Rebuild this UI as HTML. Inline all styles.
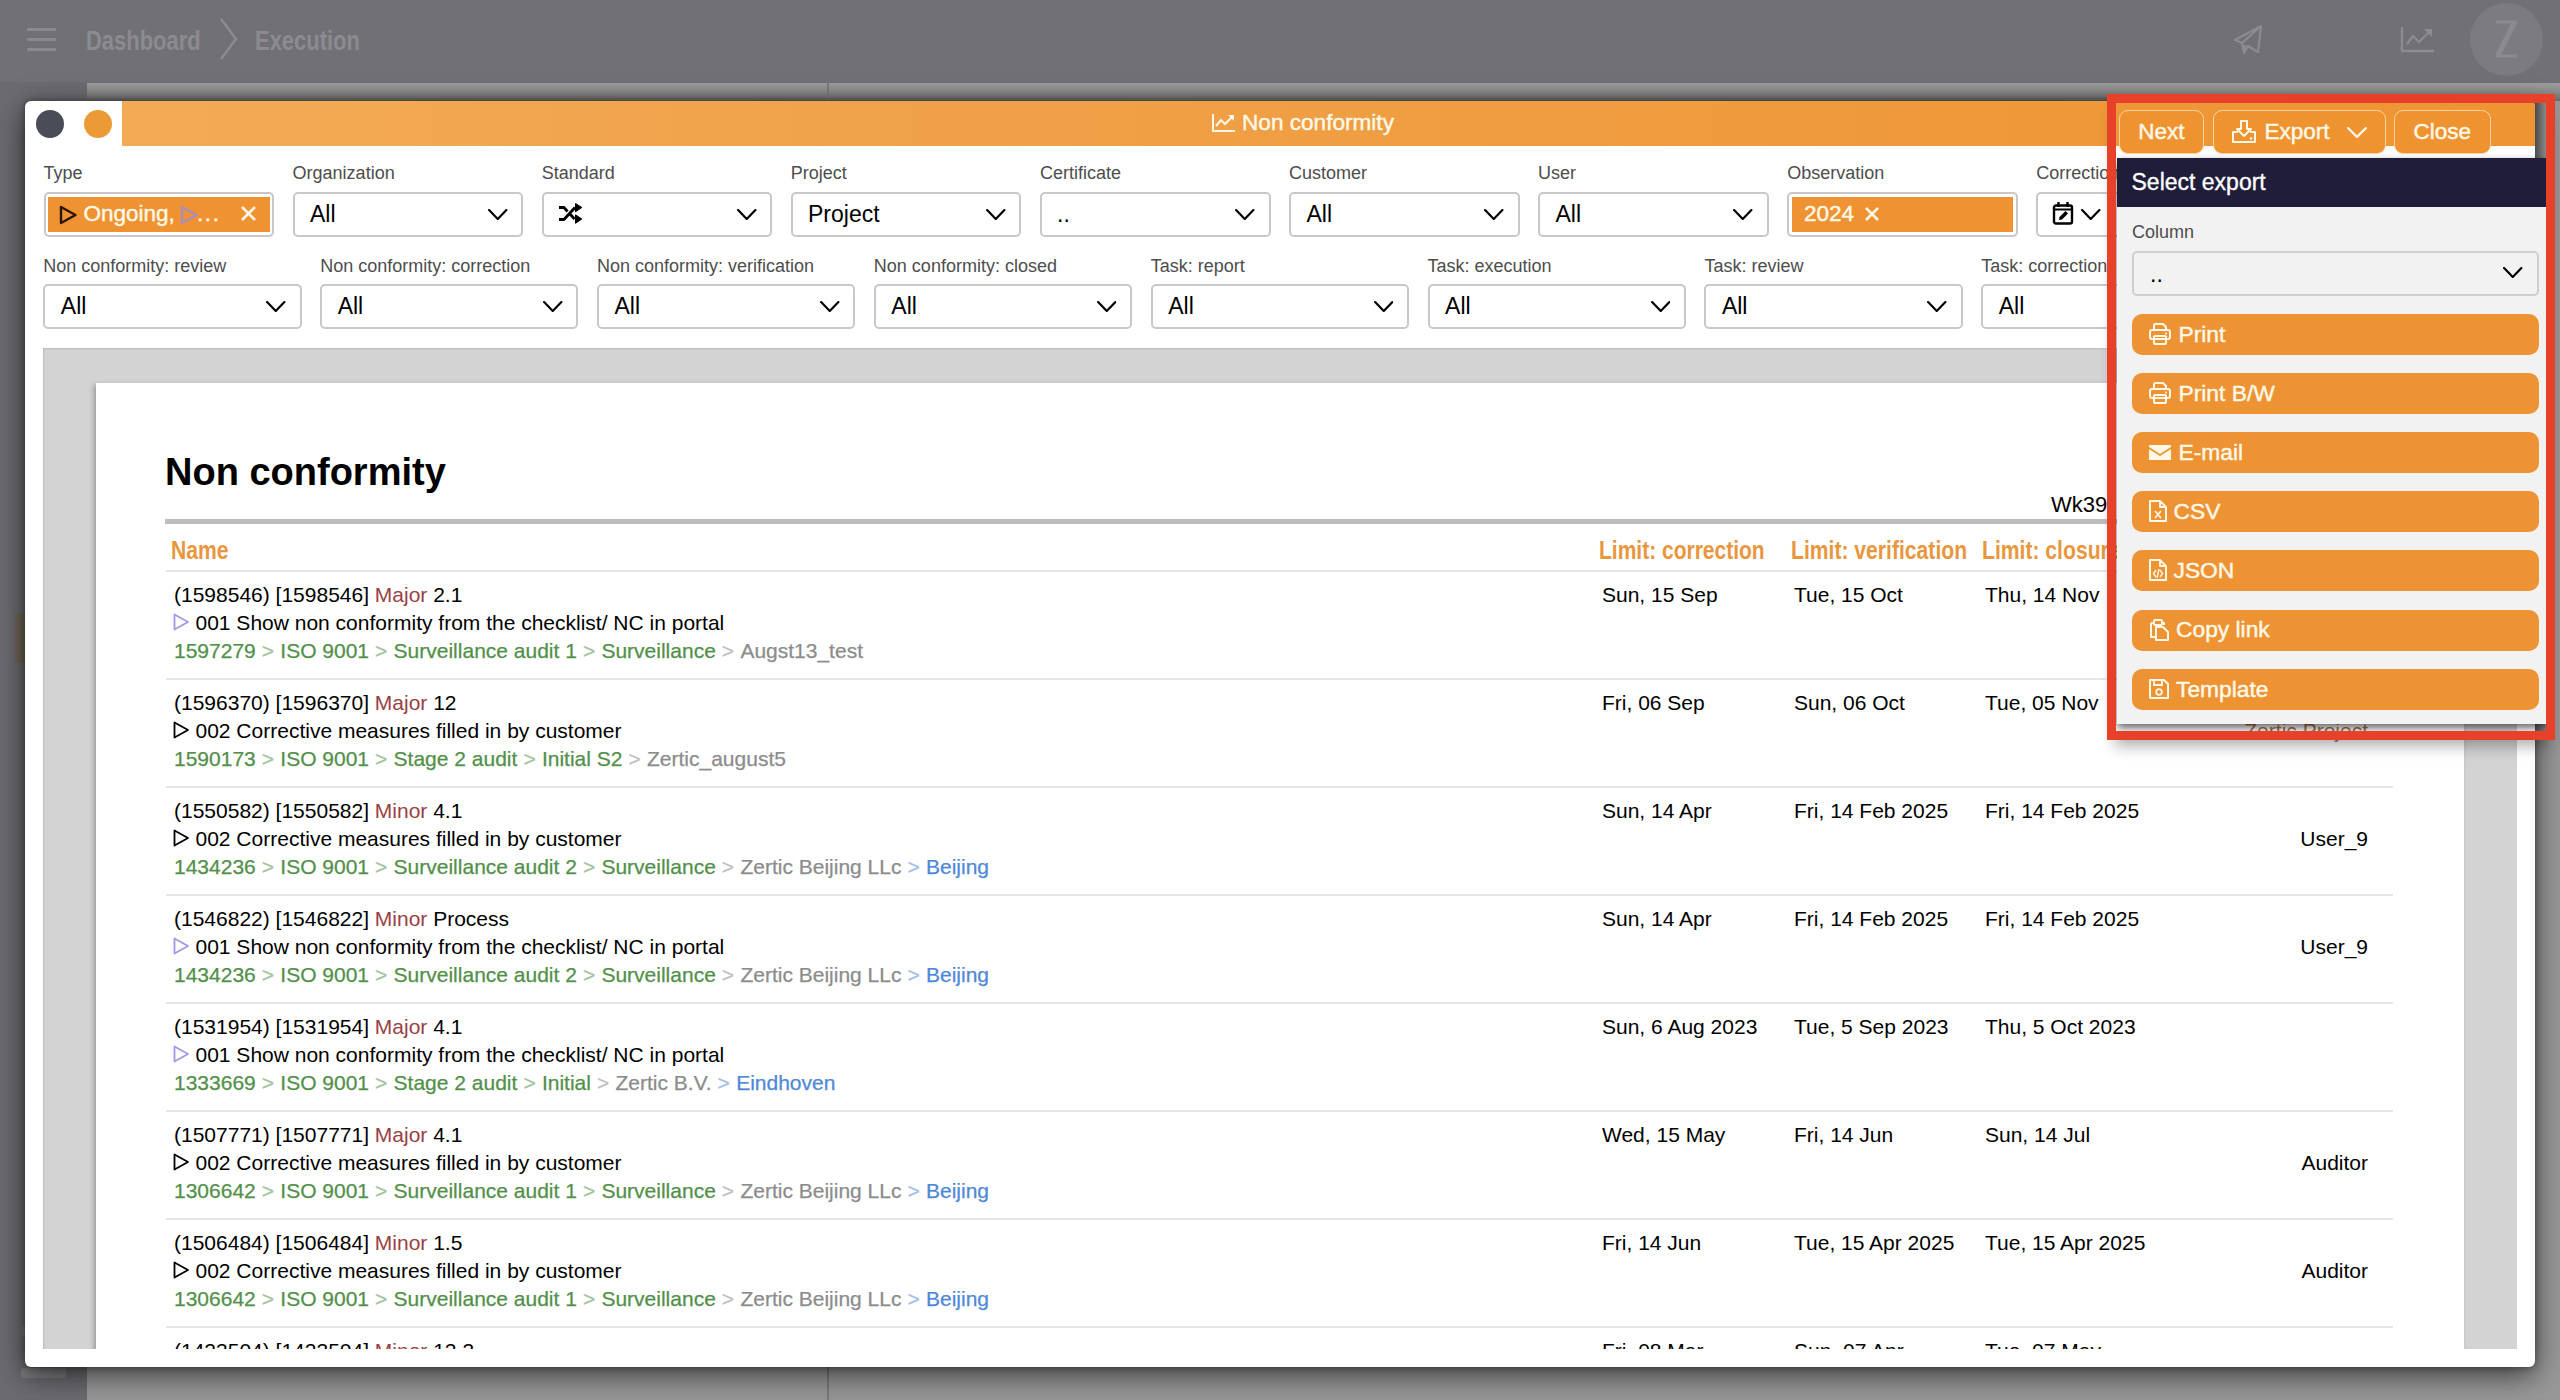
<!DOCTYPE html>
<html><head><meta charset="utf-8">
<style>
html,body{margin:0;padding:0;}
body{width:2560px;height:1400px;overflow:hidden;position:relative;background:#989898;font-family:"Liberation Sans", sans-serif;}
.a{position:absolute;}
.t{position:absolute;line-height:1;white-space:nowrap;}
</style></head><body>
<div class="a" style="left:0px;top:0px;width:2560px;height:82.7px;background:#717075;"></div>
<div class="a" style="left:0px;top:82px;width:87px;height:1318px;background:#6c6b70;"></div>
<div class="a" style="left:87px;top:82.7px;width:2473px;height:18px;background:linear-gradient(#9d9d9f,#8a8a8a 50%,#6a6a6a);"></div>
<div class="a" style="left:827px;top:82px;width:2px;height:18px;background:#7a7a7a;"></div>
<div class="a" style="left:827px;top:1367px;width:2px;height:33px;background:#7a7a7a;"></div>
<div class="a" style="left:15px;top:613px;width:14px;height:50px;background:#6f6756;border-radius:3px;"></div>
<div class="a" style="left:21px;top:1368px;width:45px;height:10px;background:#7d7c80;border-radius:3px;"></div>
<div class="a" style="left:22px;top:1326px;width:4px;height:10px;background:#79787c;"></div>
<div class="a" style="left:27px;top:28px;width:29px;height:3.2px;background:#8a898e;border-radius:1px;"></div>
<div class="a" style="left:27px;top:38px;width:29px;height:3.2px;background:#8a898e;border-radius:1px;"></div>
<div class="a" style="left:27px;top:48px;width:29px;height:3.2px;background:#8a898e;border-radius:1px;"></div>
<div class="t" style="left:86px;top:26.17px;font-size:28.5px;color:#8c8b90;font-weight:700;transform:scaleX(0.77);transform-origin:0 0;">Dashboard</div>
<svg class="a" style="left:219px;top:17px" width="20" height="44" viewBox="0 0 20 44"><polyline points="2,2 17,22 2,42" fill="none" stroke="#8c8b90" stroke-width="2.4"/></svg>
<div class="t" style="left:255px;top:26.17px;font-size:28.5px;color:#8c8b90;font-weight:700;transform:scaleX(0.77);transform-origin:0 0;">Execution</div>
<svg class="a" style="left:2232px;top:24px" width="32" height="32" viewBox="0 0 32 32"><path d="M29 2 L3 16 L10 19 L12 29 L16 22 L26 28 Z M10 19 L29 2 M12 29 L13 21" fill="none" stroke="#8c8b90" stroke-width="2.2" stroke-linejoin="round"/></svg>
<svg class="a" style="left:2400px;top:26px" width="36" height="28" viewBox="0 0 36 28"><path d="M2 1 V25 H34" fill="none" stroke="#8c8b90" stroke-width="2.4"/><path d="M7 18 L13 10 L19 16 L30 5" fill="none" stroke="#8c8b90" stroke-width="2.4"/><path d="M24 3 L32 3 L32 11 Z" fill="#8c8b90"/></svg>
<div class="a" style="left:2469.5px;top:3px;width:73px;height:73px;background:#7c7b80;border-radius:50%;"></div>
<svg class="a" style="left:2494px;top:19px" width="26" height="40" viewBox="0 0 26 40"><path d="M2 1.5 H23 V4.5 L7.5 35.5 H23 V38.5 H1.5 V35.5 L17 4.5 H2 Z" fill="#8b8a8e"/></svg>
<div class="a" style="left:25px;top:101px;width:2510px;height:1266px;background:#fff;border-radius:6px;box-shadow:0 0 6px rgba(0,0,0,0.4),0 8px 30px rgba(0,0,0,0.62);"></div>
<div class="a" style="left:122px;top:101px;width:2413px;height:45px;background:linear-gradient(90deg,#f3aa55 0%,#f0a046 40%,#ee9433 100%);border-top-right-radius:6px;"></div>
<div class="a" style="left:35.5px;top:109.5px;width:28px;height:28px;background:#4a4c58;border-radius:50%;"></div>
<div class="a" style="left:84px;top:109.5px;width:28px;height:28px;background:#ec9a35;border-radius:50%;"></div>
<svg class="a" style="left:1211px;top:113px" width="26" height="20" viewBox="0 0 26 20"><path d="M2 1 V18 H24" fill="none" stroke="#fff8e6" stroke-width="2"/><path d="M5 13 L10 7 L14 11 L21 4" fill="none" stroke="#fff8e6" stroke-width="2"/><path d="M17 2 L23 2 L23 8 Z" fill="#fff8e6"/></svg>
<div class="t" style="left:1242px;top:112.06px;font-size:22.6px;color:#fff8e6;font-weight:400;-webkit-text-stroke:0.45px #fff8e6;">Non conformity</div>
<div class="t" style="left:43.5px;top:164.06px;font-size:18px;color:#4d4d4d;font-weight:400;">Type</div>
<div class="a" style="left:43.5px;top:191.5px;width:230.7px;height:45.5px;border:2px solid #c8c8c8;border-radius:5px;box-sizing:border-box;background:#fff;"></div>
<div class="t" style="left:292.6px;top:164.06px;font-size:18px;color:#4d4d4d;font-weight:400;">Organization</div>
<div class="a" style="left:292.6px;top:191.5px;width:230.7px;height:45.5px;border:2px solid #c8c8c8;border-radius:5px;box-sizing:border-box;background:#fff;"></div>
<div class="t" style="left:541.7px;top:164.06px;font-size:18px;color:#4d4d4d;font-weight:400;">Standard</div>
<div class="a" style="left:541.7px;top:191.5px;width:230.7px;height:45.5px;border:2px solid #c8c8c8;border-radius:5px;box-sizing:border-box;background:#fff;"></div>
<div class="t" style="left:790.8px;top:164.06px;font-size:18px;color:#4d4d4d;font-weight:400;">Project</div>
<div class="a" style="left:790.8px;top:191.5px;width:230.7px;height:45.5px;border:2px solid #c8c8c8;border-radius:5px;box-sizing:border-box;background:#fff;"></div>
<div class="t" style="left:1039.9px;top:164.06px;font-size:18px;color:#4d4d4d;font-weight:400;">Certificate</div>
<div class="a" style="left:1039.9px;top:191.5px;width:230.7px;height:45.5px;border:2px solid #c8c8c8;border-radius:5px;box-sizing:border-box;background:#fff;"></div>
<div class="t" style="left:1289.0px;top:164.06px;font-size:18px;color:#4d4d4d;font-weight:400;">Customer</div>
<div class="a" style="left:1289.0px;top:191.5px;width:230.7px;height:45.5px;border:2px solid #c8c8c8;border-radius:5px;box-sizing:border-box;background:#fff;"></div>
<div class="t" style="left:1538.1px;top:164.06px;font-size:18px;color:#4d4d4d;font-weight:400;">User</div>
<div class="a" style="left:1538.1px;top:191.5px;width:230.7px;height:45.5px;border:2px solid #c8c8c8;border-radius:5px;box-sizing:border-box;background:#fff;"></div>
<div class="t" style="left:1787.2px;top:164.06px;font-size:18px;color:#4d4d4d;font-weight:400;">Observation</div>
<div class="a" style="left:1787.2px;top:191.5px;width:230.7px;height:45.5px;border:2px solid #c8c8c8;border-radius:5px;box-sizing:border-box;background:#fff;"></div>
<div class="t" style="left:2036.3px;top:164.06px;font-size:18px;color:#4d4d4d;font-weight:400;">Correction</div>
<div class="a" style="left:2036.3px;top:191.5px;width:230.7px;height:45.5px;border:2px solid #c8c8c8;border-radius:5px;box-sizing:border-box;background:#fff;"></div>
<div class="a" style="left:48px;top:197px;width:222px;height:35px;background:#ee9232;"></div>
<svg class="a" style="left:59px;top:205px" width="19" height="20" viewBox="0 0 19 20"><path d="M2 2 L16.5 10 L2 18 Z" fill="none" stroke="#2a1608" stroke-width="2.4" stroke-linejoin="round"/></svg>
<div class="t" style="left:83.5px;top:202.95px;font-size:22.5px;color:#fff8e6;font-weight:400;-webkit-text-stroke:0.45px #fff8e6;">Ongoing,</div>
<svg class="a" style="left:180px;top:205px" width="19" height="20" viewBox="0 0 19 20"><path d="M2 2 L16.5 10 L2 18 Z" fill="none" stroke="#a98cc0" stroke-width="2.4" stroke-linejoin="round"/></svg>
<div class="t" style="left:197px;top:202.95px;font-size:22.5px;color:#fff8e6;font-weight:400;letter-spacing:1.6px;-webkit-text-stroke:0.45px #fff8e6;">...</div>
<svg class="a" style="left:240px;top:205px" width="17" height="17" viewBox="0 0 17 17"><path d="M2 2 L15 15 M15 2 L2 15" stroke="#fff8e6" stroke-width="2.6"/></svg>
<div class="t" style="left:310px;top:202.53px;font-size:23px;color:#000;font-weight:400;">All</div>
<svg class="a" style="left:488px;top:208.5px" width="19.5" height="11" viewBox="0 0 19.5 11"><polyline points="1.1,1.1 9.75,9.9 18.4,1.1" fill="none" stroke="#000" stroke-width="2.2" stroke-linecap="round" stroke-linejoin="round"/></svg>
<svg class="a" style="left:557px;top:203px" width="26" height="23" viewBox="0 0 26 23"><path d="M2 4.5 H7 L10.5 8.5 M2 16.5 H7 L18 4.5 M13.5 11.5 L17.5 16" fill="none" stroke="#000" stroke-width="2.8" stroke-linejoin="round"/><path d="M18.5 0.5 L24.8 4.5 L18.5 8.8 Z M18.5 11.8 L24.8 16 L18.5 20.3 Z" fill="#000" stroke="#000" stroke-width="1" stroke-linejoin="round"/></svg>
<svg class="a" style="left:737px;top:208.5px" width="19.5" height="11" viewBox="0 0 19.5 11"><polyline points="1.1,1.1 9.75,9.9 18.4,1.1" fill="none" stroke="#000" stroke-width="2.2" stroke-linecap="round" stroke-linejoin="round"/></svg>
<div class="t" style="left:808px;top:202.53px;font-size:23px;color:#000;font-weight:400;">Project</div>
<svg class="a" style="left:986px;top:208.5px" width="19.5" height="11" viewBox="0 0 19.5 11"><polyline points="1.1,1.1 9.75,9.9 18.4,1.1" fill="none" stroke="#000" stroke-width="2.2" stroke-linecap="round" stroke-linejoin="round"/></svg>
<div class="t" style="left:1057px;top:202.53px;font-size:23px;color:#000;font-weight:400;">..</div>
<svg class="a" style="left:1235px;top:208.5px" width="19.5" height="11" viewBox="0 0 19.5 11"><polyline points="1.1,1.1 9.75,9.9 18.4,1.1" fill="none" stroke="#000" stroke-width="2.2" stroke-linecap="round" stroke-linejoin="round"/></svg>
<div class="t" style="left:1306.5px;top:202.53px;font-size:23px;color:#000;font-weight:400;">All</div>
<svg class="a" style="left:1484px;top:208.5px" width="19.5" height="11" viewBox="0 0 19.5 11"><polyline points="1.1,1.1 9.75,9.9 18.4,1.1" fill="none" stroke="#000" stroke-width="2.2" stroke-linecap="round" stroke-linejoin="round"/></svg>
<div class="t" style="left:1555.5px;top:202.53px;font-size:23px;color:#000;font-weight:400;">All</div>
<svg class="a" style="left:1733px;top:208.5px" width="19.5" height="11" viewBox="0 0 19.5 11"><polyline points="1.1,1.1 9.75,9.9 18.4,1.1" fill="none" stroke="#000" stroke-width="2.2" stroke-linecap="round" stroke-linejoin="round"/></svg>
<div class="a" style="left:1792px;top:197px;width:221px;height:35px;background:#ee9232;"></div>
<div class="t" style="left:1804px;top:202.95px;font-size:22.5px;color:#fff8e6;font-weight:400;-webkit-text-stroke:0.45px #fff8e6;">2024</div>
<svg class="a" style="left:1864px;top:206px" width="16" height="16" viewBox="0 0 16 16"><path d="M2 2 L14 14 M14 2 L2 14" stroke="#fff8e6" stroke-width="2.6"/></svg>
<svg class="a" style="left:2052px;top:201px" width="22" height="24" viewBox="0 0 22 24"><rect x="2" y="4.5" width="18" height="18" rx="2" fill="none" stroke="#000" stroke-width="2.4"/><path d="M6.5 1 V6 M15.5 1 V6" stroke="#000" stroke-width="2.4"/><path d="M2 8.5 H20" stroke="#000" stroke-width="2"/><path d="M7 19 L7.5 16 L13.5 10 L16 12.5 L10 18.5 Z" fill="#000"/></svg>
<svg class="a" style="left:2081px;top:208.5px" width="19.5" height="11" viewBox="0 0 19.5 11"><polyline points="1.1,1.1 9.75,9.9 18.4,1.1" fill="none" stroke="#000" stroke-width="2.2" stroke-linecap="round" stroke-linejoin="round"/></svg>
<div class="t" style="left:43.3px;top:256.76px;font-size:18px;color:#4d4d4d;font-weight:400;">Non conformity: review</div>
<div class="a" style="left:43.3px;top:283.6px;width:258.3px;height:45.2px;border:2px solid #c8c8c8;border-radius:5px;box-sizing:border-box;background:#fff;"></div>
<div class="t" style="left:60.8px;top:294.53px;font-size:23px;color:#000;font-weight:400;">All</div>
<svg class="a" style="left:266.3px;top:301px" width="19.5" height="11" viewBox="0 0 19.5 11"><polyline points="1.1,1.1 9.75,9.9 18.4,1.1" fill="none" stroke="#000" stroke-width="2.2" stroke-linecap="round" stroke-linejoin="round"/></svg>
<div class="t" style="left:320.15px;top:256.76px;font-size:18px;color:#4d4d4d;font-weight:400;">Non conformity: correction</div>
<div class="a" style="left:320.15px;top:283.6px;width:258.3px;height:45.2px;border:2px solid #c8c8c8;border-radius:5px;box-sizing:border-box;background:#fff;"></div>
<div class="t" style="left:337.65px;top:294.53px;font-size:23px;color:#000;font-weight:400;">All</div>
<svg class="a" style="left:543.15px;top:301px" width="19.5" height="11" viewBox="0 0 19.5 11"><polyline points="1.1,1.1 9.75,9.9 18.4,1.1" fill="none" stroke="#000" stroke-width="2.2" stroke-linecap="round" stroke-linejoin="round"/></svg>
<div class="t" style="left:597.0px;top:256.76px;font-size:18px;color:#4d4d4d;font-weight:400;">Non conformity: verification</div>
<div class="a" style="left:597.0px;top:283.6px;width:258.3px;height:45.2px;border:2px solid #c8c8c8;border-radius:5px;box-sizing:border-box;background:#fff;"></div>
<div class="t" style="left:614.5px;top:294.53px;font-size:23px;color:#000;font-weight:400;">All</div>
<svg class="a" style="left:820.0px;top:301px" width="19.5" height="11" viewBox="0 0 19.5 11"><polyline points="1.1,1.1 9.75,9.9 18.4,1.1" fill="none" stroke="#000" stroke-width="2.2" stroke-linecap="round" stroke-linejoin="round"/></svg>
<div class="t" style="left:873.85px;top:256.76px;font-size:18px;color:#4d4d4d;font-weight:400;">Non conformity: closed</div>
<div class="a" style="left:873.85px;top:283.6px;width:258.3px;height:45.2px;border:2px solid #c8c8c8;border-radius:5px;box-sizing:border-box;background:#fff;"></div>
<div class="t" style="left:891.35px;top:294.53px;font-size:23px;color:#000;font-weight:400;">All</div>
<svg class="a" style="left:1096.85px;top:301px" width="19.5" height="11" viewBox="0 0 19.5 11"><polyline points="1.1,1.1 9.75,9.9 18.4,1.1" fill="none" stroke="#000" stroke-width="2.2" stroke-linecap="round" stroke-linejoin="round"/></svg>
<div class="t" style="left:1150.7px;top:256.76px;font-size:18px;color:#4d4d4d;font-weight:400;">Task: report</div>
<div class="a" style="left:1150.7px;top:283.6px;width:258.3px;height:45.2px;border:2px solid #c8c8c8;border-radius:5px;box-sizing:border-box;background:#fff;"></div>
<div class="t" style="left:1168.2px;top:294.53px;font-size:23px;color:#000;font-weight:400;">All</div>
<svg class="a" style="left:1373.7px;top:301px" width="19.5" height="11" viewBox="0 0 19.5 11"><polyline points="1.1,1.1 9.75,9.9 18.4,1.1" fill="none" stroke="#000" stroke-width="2.2" stroke-linecap="round" stroke-linejoin="round"/></svg>
<div class="t" style="left:1427.55px;top:256.76px;font-size:18px;color:#4d4d4d;font-weight:400;">Task: execution</div>
<div class="a" style="left:1427.55px;top:283.6px;width:258.3px;height:45.2px;border:2px solid #c8c8c8;border-radius:5px;box-sizing:border-box;background:#fff;"></div>
<div class="t" style="left:1445.05px;top:294.53px;font-size:23px;color:#000;font-weight:400;">All</div>
<svg class="a" style="left:1650.55px;top:301px" width="19.5" height="11" viewBox="0 0 19.5 11"><polyline points="1.1,1.1 9.75,9.9 18.4,1.1" fill="none" stroke="#000" stroke-width="2.2" stroke-linecap="round" stroke-linejoin="round"/></svg>
<div class="t" style="left:1704.4px;top:256.76px;font-size:18px;color:#4d4d4d;font-weight:400;">Task: review</div>
<div class="a" style="left:1704.4px;top:283.6px;width:258.3px;height:45.2px;border:2px solid #c8c8c8;border-radius:5px;box-sizing:border-box;background:#fff;"></div>
<div class="t" style="left:1721.9px;top:294.53px;font-size:23px;color:#000;font-weight:400;">All</div>
<svg class="a" style="left:1927.4px;top:301px" width="19.5" height="11" viewBox="0 0 19.5 11"><polyline points="1.1,1.1 9.75,9.9 18.4,1.1" fill="none" stroke="#000" stroke-width="2.2" stroke-linecap="round" stroke-linejoin="round"/></svg>
<div class="t" style="left:1981.25px;top:256.76px;font-size:18px;color:#4d4d4d;font-weight:400;">Task: correction</div>
<div class="a" style="left:1981.25px;top:283.6px;width:258.3px;height:45.2px;border:2px solid #c8c8c8;border-radius:5px;box-sizing:border-box;background:#fff;"></div>
<div class="t" style="left:1998.75px;top:294.53px;font-size:23px;color:#000;font-weight:400;">All</div>
<svg class="a" style="left:2204.25px;top:301px" width="19.5" height="11" viewBox="0 0 19.5 11"><polyline points="1.1,1.1 9.75,9.9 18.4,1.1" fill="none" stroke="#000" stroke-width="2.2" stroke-linecap="round" stroke-linejoin="round"/></svg>
<div class="a" style="left:43px;top:348px;width:2474px;height:1001px;background:#d3d3d3;overflow:hidden;box-shadow:inset 1px 1px 2px rgba(0,0,0,0.12);">
<div class="a" style="left:53px;top:35px;width:2368px;height:1200px;background:#fff;box-shadow:-2px 2px 5px rgba(0,0,0,0.28);"></div>
<div class="t" style="left:122px;top:105.13px;font-size:38px;color:#000;font-weight:700;">Non conformity</div>
<div class="t" style="left:2008px;top:145.67px;font-size:22px;color:#000;font-weight:400;">Wk39</div>
<div class="a" style="left:122px;top:171px;width:2228px;height:5px;background:#bdbdbd;"></div>
<div class="t" style="left:128px;top:189.83px;font-size:25px;color:#e8973f;font-weight:700;transform:scaleX(0.845);transform-origin:0 0;">Name</div>
<div class="t" style="left:1556px;top:189.83px;font-size:25px;color:#e8973f;font-weight:700;transform:scaleX(0.84);transform-origin:0 0;">Limit: correction</div>
<div class="t" style="left:1747.5px;top:189.83px;font-size:25px;color:#e8973f;font-weight:700;transform:scaleX(0.845);transform-origin:0 0;">Limit: verification</div>
<div class="t" style="left:1939px;top:189.83px;font-size:25px;color:#e8973f;font-weight:700;transform:scaleX(0.845);transform-origin:0 0;">Limit: closure</div>
<div class="t" style="left:2207px;top:189.83px;font-size:25px;color:#e8973f;font-weight:700;transform:scaleX(0.845);transform-origin:0 0;">User</div>
<div class="a" style="left:123px;top:222px;width:2227px;height:2px;background:#e6e6e6;"></div>
<div class="t" style="left:131px;top:236.22px;font-size:21px;color:#000;font-weight:400;">(1598546) [1598546] <span style="color:#9a4043">Major</span> 2.1</div>
<svg class="a" style="left:130px;top:265.29999999999995px" width="17" height="18" viewBox="0 0 17 18"><path d="M1.5 1.5 L15 9 L1.5 16.5 Z" fill="none" stroke="#9c9ce6" stroke-width="1.8" stroke-linejoin="round"/></svg>
<div class="t" style="left:152.5px;top:264.22px;font-size:21px;color:#000;font-weight:400;">001 Show non conformity from the checklist/ NC in portal</div>
<div class="t" style="left:131px;top:291.72px;font-size:21px;color:#000;font-weight:400;-webkit-text-stroke:0.25px currentColor;"><span style="color:#52904a">1597279</span><span style="color:#52904a;opacity:0.55;letter-spacing:0.2px"> &gt; </span><span style="color:#52904a">ISO 9001</span><span style="color:#52904a;opacity:0.55;letter-spacing:0.2px"> &gt; </span><span style="color:#52904a">Surveillance audit 1</span><span style="color:#52904a;opacity:0.55;letter-spacing:0.2px"> &gt; </span><span style="color:#52904a">Surveillance</span><span style="color:#8c8c8c;opacity:0.55;letter-spacing:0.2px"> &gt; </span><span style="color:#8c8c8c">Augst13_test</span></div>
<div class="t" style="left:1559px;top:236.22px;font-size:21px;color:#000;font-weight:400;">Sun, 15 Sep</div>
<div class="t" style="left:1751px;top:236.22px;font-size:21px;color:#000;font-weight:400;">Tue, 15 Oct</div>
<div class="t" style="left:1942px;top:236.22px;font-size:21px;color:#000;font-weight:400;">Thu, 14 Nov</div>
<div class="a" style="left:123px;top:330px;width:2227px;height:2px;background:#e6e6e6;"></div>
<div class="t" style="left:131px;top:344.22px;font-size:21px;color:#000;font-weight:400;">(1596370) [1596370] <span style="color:#9a4043">Major</span> 12</div>
<svg class="a" style="left:130px;top:373.29999999999995px" width="17" height="18" viewBox="0 0 17 18"><path d="M1.5 1.5 L15 9 L1.5 16.5 Z" fill="none" stroke="#000" stroke-width="1.8" stroke-linejoin="round"/></svg>
<div class="t" style="left:152.5px;top:372.22px;font-size:21px;color:#000;font-weight:400;">002 Corrective measures filled in by customer</div>
<div class="t" style="left:131px;top:399.72px;font-size:21px;color:#000;font-weight:400;-webkit-text-stroke:0.25px currentColor;"><span style="color:#52904a">1590173</span><span style="color:#52904a;opacity:0.55;letter-spacing:0.2px"> &gt; </span><span style="color:#52904a">ISO 9001</span><span style="color:#52904a;opacity:0.55;letter-spacing:0.2px"> &gt; </span><span style="color:#52904a">Stage 2 audit</span><span style="color:#52904a;opacity:0.55;letter-spacing:0.2px"> &gt; </span><span style="color:#52904a">Initial S2</span><span style="color:#8c8c8c;opacity:0.55;letter-spacing:0.2px"> &gt; </span><span style="color:#8c8c8c">Zertic_august5</span></div>
<div class="t" style="left:1559px;top:344.22px;font-size:21px;color:#000;font-weight:400;">Fri, 06 Sep</div>
<div class="t" style="left:1751px;top:344.22px;font-size:21px;color:#000;font-weight:400;">Sun, 06 Oct</div>
<div class="t" style="left:1942px;top:344.22px;font-size:21px;color:#000;font-weight:400;">Tue, 05 Nov</div>
<div class="t" style="right:149px;top:372.22px;font-size:21px;color:#a87550">Zertic Project</div>
<div class="a" style="left:123px;top:438px;width:2227px;height:2px;background:#e6e6e6;"></div>
<div class="t" style="left:131px;top:452.22px;font-size:21px;color:#000;font-weight:400;">(1550582) [1550582] <span style="color:#9a4043">Minor</span> 4.1</div>
<svg class="a" style="left:130px;top:481.29999999999995px" width="17" height="18" viewBox="0 0 17 18"><path d="M1.5 1.5 L15 9 L1.5 16.5 Z" fill="none" stroke="#000" stroke-width="1.8" stroke-linejoin="round"/></svg>
<div class="t" style="left:152.5px;top:480.22px;font-size:21px;color:#000;font-weight:400;">002 Corrective measures filled in by customer</div>
<div class="t" style="left:131px;top:507.72px;font-size:21px;color:#000;font-weight:400;-webkit-text-stroke:0.25px currentColor;"><span style="color:#52904a">1434236</span><span style="color:#52904a;opacity:0.55;letter-spacing:0.2px"> &gt; </span><span style="color:#52904a">ISO 9001</span><span style="color:#52904a;opacity:0.55;letter-spacing:0.2px"> &gt; </span><span style="color:#52904a">Surveillance audit 2</span><span style="color:#52904a;opacity:0.55;letter-spacing:0.2px"> &gt; </span><span style="color:#52904a">Surveillance</span><span style="color:#8c8c8c;opacity:0.55;letter-spacing:0.2px"> &gt; </span><span style="color:#8c8c8c">Zertic Beijing LLc</span><span style="color:#4f88d8;opacity:0.55;letter-spacing:0.2px"> &gt; </span><span style="color:#4f88d8">Beijing</span></div>
<div class="t" style="left:1559px;top:452.22px;font-size:21px;color:#000;font-weight:400;">Sun, 14 Apr</div>
<div class="t" style="left:1751px;top:452.22px;font-size:21px;color:#000;font-weight:400;">Fri, 14 Feb 2025</div>
<div class="t" style="left:1942px;top:452.22px;font-size:21px;color:#000;font-weight:400;">Fri, 14 Feb 2025</div>
<div class="t" style="right:149px;top:480.22px;font-size:21px;color:#000">User_9</div>
<div class="a" style="left:123px;top:546px;width:2227px;height:2px;background:#e6e6e6;"></div>
<div class="t" style="left:131px;top:560.22px;font-size:21px;color:#000;font-weight:400;">(1546822) [1546822] <span style="color:#9a4043">Minor</span> Process</div>
<svg class="a" style="left:130px;top:589.3px" width="17" height="18" viewBox="0 0 17 18"><path d="M1.5 1.5 L15 9 L1.5 16.5 Z" fill="none" stroke="#9c9ce6" stroke-width="1.8" stroke-linejoin="round"/></svg>
<div class="t" style="left:152.5px;top:588.22px;font-size:21px;color:#000;font-weight:400;">001 Show non conformity from the checklist/ NC in portal</div>
<div class="t" style="left:131px;top:615.72px;font-size:21px;color:#000;font-weight:400;-webkit-text-stroke:0.25px currentColor;"><span style="color:#52904a">1434236</span><span style="color:#52904a;opacity:0.55;letter-spacing:0.2px"> &gt; </span><span style="color:#52904a">ISO 9001</span><span style="color:#52904a;opacity:0.55;letter-spacing:0.2px"> &gt; </span><span style="color:#52904a">Surveillance audit 2</span><span style="color:#52904a;opacity:0.55;letter-spacing:0.2px"> &gt; </span><span style="color:#52904a">Surveillance</span><span style="color:#8c8c8c;opacity:0.55;letter-spacing:0.2px"> &gt; </span><span style="color:#8c8c8c">Zertic Beijing LLc</span><span style="color:#4f88d8;opacity:0.55;letter-spacing:0.2px"> &gt; </span><span style="color:#4f88d8">Beijing</span></div>
<div class="t" style="left:1559px;top:560.22px;font-size:21px;color:#000;font-weight:400;">Sun, 14 Apr</div>
<div class="t" style="left:1751px;top:560.22px;font-size:21px;color:#000;font-weight:400;">Fri, 14 Feb 2025</div>
<div class="t" style="left:1942px;top:560.22px;font-size:21px;color:#000;font-weight:400;">Fri, 14 Feb 2025</div>
<div class="t" style="right:149px;top:588.22px;font-size:21px;color:#000">User_9</div>
<div class="a" style="left:123px;top:654px;width:2227px;height:2px;background:#e6e6e6;"></div>
<div class="t" style="left:131px;top:668.22px;font-size:21px;color:#000;font-weight:400;">(1531954) [1531954] <span style="color:#9a4043">Major</span> 4.1</div>
<svg class="a" style="left:130px;top:697.3px" width="17" height="18" viewBox="0 0 17 18"><path d="M1.5 1.5 L15 9 L1.5 16.5 Z" fill="none" stroke="#9c9ce6" stroke-width="1.8" stroke-linejoin="round"/></svg>
<div class="t" style="left:152.5px;top:696.22px;font-size:21px;color:#000;font-weight:400;">001 Show non conformity from the checklist/ NC in portal</div>
<div class="t" style="left:131px;top:723.72px;font-size:21px;color:#000;font-weight:400;-webkit-text-stroke:0.25px currentColor;"><span style="color:#52904a">1333669</span><span style="color:#52904a;opacity:0.55;letter-spacing:0.2px"> &gt; </span><span style="color:#52904a">ISO 9001</span><span style="color:#52904a;opacity:0.55;letter-spacing:0.2px"> &gt; </span><span style="color:#52904a">Stage 2 audit</span><span style="color:#52904a;opacity:0.55;letter-spacing:0.2px"> &gt; </span><span style="color:#52904a">Initial</span><span style="color:#8c8c8c;opacity:0.55;letter-spacing:0.2px"> &gt; </span><span style="color:#8c8c8c">Zertic B.V.</span><span style="color:#4f88d8;opacity:0.55;letter-spacing:0.2px"> &gt; </span><span style="color:#4f88d8">Eindhoven</span></div>
<div class="t" style="left:1559px;top:668.22px;font-size:21px;color:#000;font-weight:400;">Sun, 6 Aug 2023</div>
<div class="t" style="left:1751px;top:668.22px;font-size:21px;color:#000;font-weight:400;">Tue, 5 Sep 2023</div>
<div class="t" style="left:1942px;top:668.22px;font-size:21px;color:#000;font-weight:400;">Thu, 5 Oct 2023</div>
<div class="a" style="left:123px;top:762px;width:2227px;height:2px;background:#e6e6e6;"></div>
<div class="t" style="left:131px;top:776.22px;font-size:21px;color:#000;font-weight:400;">(1507771) [1507771] <span style="color:#9a4043">Major</span> 4.1</div>
<svg class="a" style="left:130px;top:805.3px" width="17" height="18" viewBox="0 0 17 18"><path d="M1.5 1.5 L15 9 L1.5 16.5 Z" fill="none" stroke="#000" stroke-width="1.8" stroke-linejoin="round"/></svg>
<div class="t" style="left:152.5px;top:804.22px;font-size:21px;color:#000;font-weight:400;">002 Corrective measures filled in by customer</div>
<div class="t" style="left:131px;top:831.72px;font-size:21px;color:#000;font-weight:400;-webkit-text-stroke:0.25px currentColor;"><span style="color:#52904a">1306642</span><span style="color:#52904a;opacity:0.55;letter-spacing:0.2px"> &gt; </span><span style="color:#52904a">ISO 9001</span><span style="color:#52904a;opacity:0.55;letter-spacing:0.2px"> &gt; </span><span style="color:#52904a">Surveillance audit 1</span><span style="color:#52904a;opacity:0.55;letter-spacing:0.2px"> &gt; </span><span style="color:#52904a">Surveillance</span><span style="color:#8c8c8c;opacity:0.55;letter-spacing:0.2px"> &gt; </span><span style="color:#8c8c8c">Zertic Beijing LLc</span><span style="color:#4f88d8;opacity:0.55;letter-spacing:0.2px"> &gt; </span><span style="color:#4f88d8">Beijing</span></div>
<div class="t" style="left:1559px;top:776.22px;font-size:21px;color:#000;font-weight:400;">Wed, 15 May</div>
<div class="t" style="left:1751px;top:776.22px;font-size:21px;color:#000;font-weight:400;">Fri, 14 Jun</div>
<div class="t" style="left:1942px;top:776.22px;font-size:21px;color:#000;font-weight:400;">Sun, 14 Jul</div>
<div class="t" style="right:149px;top:804.22px;font-size:21px;color:#000">Auditor</div>
<div class="a" style="left:123px;top:870px;width:2227px;height:2px;background:#e6e6e6;"></div>
<div class="t" style="left:131px;top:884.22px;font-size:21px;color:#000;font-weight:400;">(1506484) [1506484] <span style="color:#9a4043">Minor</span> 1.5</div>
<svg class="a" style="left:130px;top:913.3px" width="17" height="18" viewBox="0 0 17 18"><path d="M1.5 1.5 L15 9 L1.5 16.5 Z" fill="none" stroke="#000" stroke-width="1.8" stroke-linejoin="round"/></svg>
<div class="t" style="left:152.5px;top:912.22px;font-size:21px;color:#000;font-weight:400;">002 Corrective measures filled in by customer</div>
<div class="t" style="left:131px;top:939.72px;font-size:21px;color:#000;font-weight:400;-webkit-text-stroke:0.25px currentColor;"><span style="color:#52904a">1306642</span><span style="color:#52904a;opacity:0.55;letter-spacing:0.2px"> &gt; </span><span style="color:#52904a">ISO 9001</span><span style="color:#52904a;opacity:0.55;letter-spacing:0.2px"> &gt; </span><span style="color:#52904a">Surveillance audit 1</span><span style="color:#52904a;opacity:0.55;letter-spacing:0.2px"> &gt; </span><span style="color:#52904a">Surveillance</span><span style="color:#8c8c8c;opacity:0.55;letter-spacing:0.2px"> &gt; </span><span style="color:#8c8c8c">Zertic Beijing LLc</span><span style="color:#4f88d8;opacity:0.55;letter-spacing:0.2px"> &gt; </span><span style="color:#4f88d8">Beijing</span></div>
<div class="t" style="left:1559px;top:884.22px;font-size:21px;color:#000;font-weight:400;">Fri, 14 Jun</div>
<div class="t" style="left:1751px;top:884.22px;font-size:21px;color:#000;font-weight:400;">Tue, 15 Apr 2025</div>
<div class="t" style="left:1942px;top:884.22px;font-size:21px;color:#000;font-weight:400;">Tue, 15 Apr 2025</div>
<div class="t" style="right:149px;top:912.22px;font-size:21px;color:#000">Auditor</div>
<div class="a" style="left:123px;top:978px;width:2227px;height:2px;background:#e6e6e6;"></div>
<div class="t" style="left:131px;top:992.22px;font-size:21px;color:#000;font-weight:400;">(1423504) [1423504] <span style="color:#9a4043">Minor</span> 12.3</div>
<svg class="a" style="left:130px;top:1021.3px" width="17" height="18" viewBox="0 0 17 18"><path d="M1.5 1.5 L15 9 L1.5 16.5 Z" fill="none" stroke="#000" stroke-width="1.8" stroke-linejoin="round"/></svg>
<div class="t" style="left:152.5px;top:1020.22px;font-size:21px;color:#000;font-weight:400;">002 Corrective measures filled in by customer</div>
<div class="t" style="left:131px;top:1047.72px;font-size:21px;color:#000;font-weight:400;-webkit-text-stroke:0.25px currentColor;"><span style="color:#52904a">1306642</span><span style="color:#52904a;opacity:0.55;letter-spacing:0.2px"> &gt; </span><span style="color:#52904a">ISO 9001</span><span style="color:#52904a;opacity:0.55;letter-spacing:0.2px"> &gt; </span><span style="color:#52904a">Surveillance audit 1</span><span style="color:#52904a;opacity:0.55;letter-spacing:0.2px"> &gt; </span><span style="color:#52904a">Surveillance</span><span style="color:#8c8c8c;opacity:0.55;letter-spacing:0.2px"> &gt; </span><span style="color:#8c8c8c">Zertic Beijing LLc</span><span style="color:#4f88d8;opacity:0.55;letter-spacing:0.2px"> &gt; </span><span style="color:#4f88d8">Beijing</span></div>
<div class="t" style="left:1559px;top:992.22px;font-size:21px;color:#000;font-weight:400;">Fri, 08 Mar</div>
<div class="t" style="left:1751px;top:992.22px;font-size:21px;color:#000;font-weight:400;">Sun, 07 Apr</div>
<div class="t" style="left:1942px;top:992.22px;font-size:21px;color:#000;font-weight:400;">Tue, 07 May</div>
<div class="a" style="left:123px;top:1086px;width:2227px;height:2px;background:#e6e6e6;"></div>
</div>
<div class="a" style="left:2535px;top:103px;width:11px;height:55px;background:linear-gradient(90deg,#4a4a4a,#8a8a8a);"></div>
<div class="a" style="left:2119px;top:110px;width:85px;height:44px;background:#ef9331;border:1.5px solid #fcd39e;border-radius:9px;box-sizing:border-box;"></div>
<div class="t" style="left:2138.3px;top:120.55px;font-size:22.5px;color:#fff8e6;font-weight:400;-webkit-text-stroke:0.45px #fff8e6;">Next</div>
<div class="a" style="left:2213px;top:110px;width:173px;height:44px;background:#ef9331;border:1.5px solid #fcd39e;border-radius:9px;box-sizing:border-box;"></div>
<svg class="a" style="left:2230px;top:119px" width="28" height="25" viewBox="0 0 28 25"><path d="M11 2 H17 V10 H21 L14 17 L7 10 H11 Z" fill="none" stroke="#fff8e6" stroke-width="2" stroke-linejoin="round"/><path d="M8 13 H3 V23 H25 V13 H20" fill="none" stroke="#fff8e6" stroke-width="2" stroke-linejoin="round"/><circle cx="21" cy="19.5" r="1.3" fill="#fff8e6"/></svg>
<div class="t" style="left:2264.5px;top:120.75px;font-size:22.5px;color:#fff8e6;font-weight:400;-webkit-text-stroke:0.45px #fff8e6;">Export</div>
<svg class="a" style="left:2347px;top:126.5px" width="20" height="11" viewBox="0 0 20 11"><polyline points="1.1,1.1 10.0,9.9 18.9,1.1" fill="none" stroke="#fff8e6" stroke-width="2.2" stroke-linecap="round" stroke-linejoin="round"/></svg>
<div class="a" style="left:2394px;top:110px;width:97px;height:44px;background:#ef9331;border:1.5px solid #fcd39e;border-radius:9px;box-sizing:border-box;"></div>
<div class="t" style="left:2413.5px;top:120.75px;font-size:22.5px;color:#fff8e6;font-weight:400;-webkit-text-stroke:0.45px #fff8e6;">Close</div>
<div class="a" style="left:2117px;top:158px;width:429px;height:566px;background:#f2f2f2;box-shadow:0 4px 8px rgba(0,0,0,0.6);"></div>
<div class="a" style="left:2117px;top:158px;width:429px;height:49px;background:#1f1d39;"></div>
<div class="t" style="left:2131.5px;top:171.33px;font-size:23px;color:#fff;font-weight:400;-webkit-text-stroke:0.35px #fff;">Select export</div>
<div class="t" style="left:2132px;top:222.76px;font-size:18px;color:#4d4d4d;font-weight:400;">Column</div>
<div class="a" style="left:2132px;top:251px;width:407px;height:45px;border:2px solid #cfcfcf;border-radius:5px;box-sizing:border-box;background:#f2f2f2;"></div>
<div class="t" style="left:2150px;top:262.53px;font-size:23px;color:#000;font-weight:400;">..</div>
<svg class="a" style="left:2503px;top:267px" width="19.5" height="11" viewBox="0 0 19.5 11"><polyline points="1.1,1.1 9.75,9.9 18.4,1.1" fill="none" stroke="#000" stroke-width="2.2" stroke-linecap="round" stroke-linejoin="round"/></svg>
<div class="a" style="left:2132px;top:313.8px;width:407px;height:41px;background:#ee9333;border-radius:10px;"></div>
<svg class="a" style="left:2148px;top:321.8px" width="24" height="24" viewBox="0 0 24 24"><path d="M6 8 V3.5 Q6 2 7.5 2 H15 L18 5 V8" fill="none" stroke="#fff8e6" stroke-width="2"/><rect x="2" y="8" width="20" height="9" rx="2" fill="none" stroke="#fff8e6" stroke-width="2"/><rect x="6" y="14" width="12" height="8" rx="1" fill="none" stroke="#fff8e6" stroke-width="2"/><circle cx="18" cy="11.5" r="1" fill="#fff8e6"/></svg><div class="t" style="left:2178.5px;top:322.80px;font-size:22.8px;color:#fff8e6;font-weight:400;-webkit-text-stroke:0.45px #fff8e6;">Print</div>
<div class="a" style="left:2132px;top:372.9px;width:407px;height:41px;background:#ee9333;border-radius:10px;"></div>
<svg class="a" style="left:2148px;top:380.9px" width="24" height="24" viewBox="0 0 24 24"><path d="M6 8 V3.5 Q6 2 7.5 2 H15 L18 5 V8" fill="none" stroke="#fff8e6" stroke-width="2"/><rect x="2" y="8" width="20" height="9" rx="2" fill="none" stroke="#fff8e6" stroke-width="2"/><rect x="6" y="14" width="12" height="8" rx="1" fill="none" stroke="#fff8e6" stroke-width="2"/><circle cx="18" cy="11.5" r="1" fill="#fff8e6"/></svg><div class="t" style="left:2178.5px;top:381.93px;font-size:22.8px;color:#fff8e6;font-weight:400;-webkit-text-stroke:0.45px #fff8e6;">Print B/W</div>
<div class="a" style="left:2132px;top:432.1px;width:407px;height:41px;background:#ee9333;border-radius:10px;"></div>
<svg class="a" style="left:2148px;top:440.1px" width="24" height="24" viewBox="0 0 24 24"><path d="M1 5 H23 V7 L12 14 L1 7 Z" fill="#fff8e6"/><path d="M1 9 L12 16 L23 9 V20 H1 Z" fill="#fff8e6"/></svg><div class="t" style="left:2178.5px;top:441.06px;font-size:22.8px;color:#fff8e6;font-weight:400;-webkit-text-stroke:0.45px #fff8e6;">E-mail</div>
<div class="a" style="left:2132px;top:491.2px;width:407px;height:41px;background:#ee9333;border-radius:10px;"></div>
<svg class="a" style="left:2148px;top:499.2px" width="20" height="24" viewBox="0 0 20 24"><path d="M2 2 H12 L18 8 V22 H2 Z M12 2 V8 H18" fill="none" stroke="#fff8e6" stroke-width="2" stroke-linejoin="round"/><path d="M7 12 L13 19 M13 12 L7 19" stroke="#fff8e6" stroke-width="1.6"/></svg><div class="t" style="left:2173.5px;top:500.19px;font-size:22.8px;color:#fff8e6;font-weight:400;-webkit-text-stroke:0.45px #fff8e6;">CSV</div>
<div class="a" style="left:2132px;top:550.3px;width:407px;height:41px;background:#ee9333;border-radius:10px;"></div>
<svg class="a" style="left:2148px;top:558.3px" width="20" height="24" viewBox="0 0 20 24"><path d="M2 2 H12 L18 8 V22 H2 Z M12 2 V8 H18" fill="none" stroke="#fff8e6" stroke-width="2" stroke-linejoin="round"/><path d="M8 12 L5.5 15.5 L8 19 M12 12 L14.5 15.5 L12 19 M11 11 L9 20" fill="none" stroke="#fff8e6" stroke-width="1.4"/></svg><div class="t" style="left:2173.5px;top:559.32px;font-size:22.8px;color:#fff8e6;font-weight:400;-webkit-text-stroke:0.45px #fff8e6;">JSON</div>
<div class="a" style="left:2132px;top:609.5px;width:407px;height:41px;background:#ee9333;border-radius:10px;"></div>
<svg class="a" style="left:2148px;top:617.5px" width="22" height="24" viewBox="0 0 22 24"><path d="M3 5 H6 M14 5 H16 V7 M3 5 V19 H7" fill="none" stroke="#fff8e6" stroke-width="2"/><rect x="6" y="2" width="8" height="5" rx="1" fill="none" stroke="#fff8e6" stroke-width="2"/><path d="M8 9 H15 L20 14 V22 H8 Z" fill="none" stroke="#fff8e6" stroke-width="2" stroke-linejoin="round"/></svg><div class="t" style="left:2176px;top:618.45px;font-size:22.8px;color:#fff8e6;font-weight:400;-webkit-text-stroke:0.45px #fff8e6;">Copy link</div>
<div class="a" style="left:2132px;top:668.6px;width:407px;height:41px;background:#ee9333;border-radius:10px;"></div>
<svg class="a" style="left:2148px;top:676.6px" width="22" height="24" viewBox="0 0 22 24"><path d="M2 3 H16 L20 7 V21 H2 Z" fill="none" stroke="#fff8e6" stroke-width="2" stroke-linejoin="round"/><path d="M6 3 V8 H14 V3" fill="none" stroke="#fff8e6" stroke-width="1.8"/><circle cx="11" cy="15" r="2.8" fill="none" stroke="#fff8e6" stroke-width="1.8"/></svg><div class="t" style="left:2176px;top:677.58px;font-size:22.8px;color:#fff8e6;font-weight:400;-webkit-text-stroke:0.45px #fff8e6;">Template</div>
<div class="a" style="left:2107px;top:94px;width:448px;height:646px;border:9px solid #e8412a;box-sizing:border-box;box-shadow:0 14px 14px -8px rgba(0,0,0,0.32);"></div>
</body></html>
